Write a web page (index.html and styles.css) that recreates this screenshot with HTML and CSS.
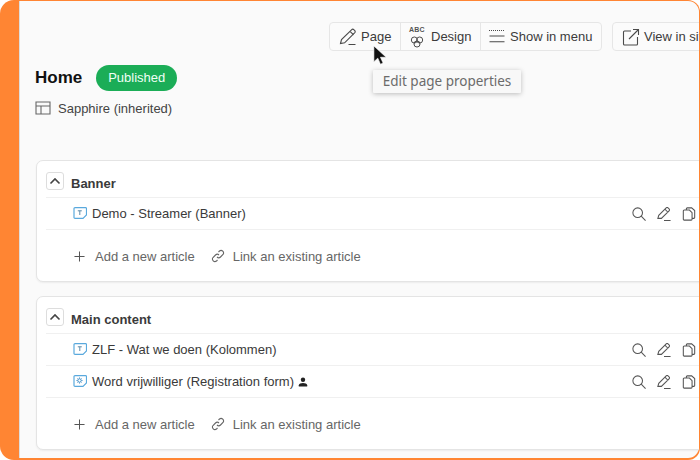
FILE: index.html
```html
<!DOCTYPE html>
<html lang="en">
<head>
<meta charset="utf-8">
<title>Home</title>
<link rel="stylesheet" href="styles.css">
</head>
<body>
<div class="frame">
  <main class="panel">
    <div class="toolbar">
      <div class="btn-group">
        <div class="btn page"><svg class="ico" viewBox="0 0 18 18"><path d="M1.500 15.500l1-4L12.500 1.800a1.800 1.800 0 0 1 2.500 0l.6.6a1.800 1.800 0 0 1 0 2.500L5.600 14.800z M11 3.300l3.600 3.600 M9.500 16.500h7"/></svg>Page</div>
        <div class="btn design"><svg class="ico" viewBox="0 0 18 18"><circle cx="6" cy="9" r="3.400"/><circle cx="12" cy="9" r="3.400"/><circle cx="9" cy="13.500" r="3.400"/></svg><span class="abc">ABC</span>Design</div>
        <div class="btn menu"><svg class="ico" viewBox="0 0 18 18"><path d="M0 2.500h16" stroke-dasharray="1 1"/><path d="M.5 8h15M.5 13.700h15"/></svg>Show in menu</div>
      </div>
      <div class="btn-group view"><div class="btn"><svg class="ico" viewBox="0 0 18 18"><path d="M9 3H2.500a1 1 0 0 0-1 1v12a1 1 0 0 0 1 1h12a1 1 0 0 0 1-1V9M7 11L16.500 1.500M11 1.500h5.500V7"/></svg>View in site</div></div>
    </div>
    <div class="tooltip">Edit page properties</div>
    <svg class="cursor" viewBox="0 0 16 24"><path d="M1 1v18l4.500-4 3 7 3-1.300-3-6.700H15z"/></svg>
    <div class="title-row"><h1>Home</h1><span class="badge">Published</span></div>
    <div class="layout-row"><svg class="layout-ico" viewBox="0 0 16 16"><path d="M1 2h14v12H1zM1 6h14M6 6v8"/></svg>Sapphire (inherited)</div>

    <section class="card banner">
      <header class="card-head"><span class="toggle"><svg viewBox="0 0 12 8"><path d="M1.500 6.500L6 2l4.500 4.500"/></svg></span><h2>Banner</h2></header>
      <div class="row">
        <svg class="art" viewBox="0 0 14 12"><path d="M2 .6h10.500a1 1 0 0 1 1 1V8L10 11.400H2a1 1 0 0 1-1-1V1.600a1 1 0 0 1 1-1z"/><path class="dark" d="M4.800 3.800h4M6.800 3.800v4.200"/></svg>
        <span class="name">Demo - Streamer (Banner)</span>
        <span class="actions"><svg viewBox="0 0 16 16"><circle cx="6.500" cy="6.500" r="5.500"/><path d="M10.500 10.500L15.500 15.500"/></svg><svg viewBox="0 0 16 16"><path d="M1 13l1-3.500L10.500 1a1.500 1.500 0 0 1 2.100 0l1.200 1.200a1.500 1.500 0 0 1 0 2.100L5 13zM9 2.500L12.500 6M8 15.500h7.500"/></svg><svg viewBox="0 0 16 16"><path d="M5 3.500V2a1 1 0 0 1 1-1h5l3.500 3v8a1 1 0 0 1-1 1H12M2.500 3.500h6l3 3V14a1 1 0 0 1-1 1h-8a1 1 0 0 1-1-1V4.500a1 1 0 0 1 1-1z"/></svg></span>
      </div>
      <footer class="add-row">
        <span class="add"><svg viewBox="0 0 12 12"><path d="M6 .5v11M.5 6h11"/></svg>Add a new article</span>
        <span class="link"><svg viewBox="0 0 14 14"><path d="M6 8a2.500 2.500 0 0 0 3.500 0l2.500-2.500A2.500 2.500 0 0 0 8.500 2L7.500 3M8 6a2.500 2.500 0 0 0-3.500 0L2 8.500A2.500 2.500 0 0 0 5.500 12l1-1"/></svg>Link an existing article</span>
      </footer>
    </section>

    <section class="card main">
      <header class="card-head"><span class="toggle"><svg viewBox="0 0 12 8"><path d="M1.500 6.500L6 2l4.500 4.500"/></svg></span><h2>Main content</h2></header>
      <div class="row">
        <svg class="art" viewBox="0 0 14 12"><path d="M2 .6h10.500a1 1 0 0 1 1 1V8L10 11.400H2a1 1 0 0 1-1-1V1.600a1 1 0 0 1 1-1z"/><path class="dark" d="M4.800 3.800h4M6.800 3.800v4.200"/></svg>
        <span class="name">ZLF - Wat we doen (Kolommen)</span>
        <span class="actions"><svg viewBox="0 0 16 16"><circle cx="6.500" cy="6.500" r="5.500"/><path d="M10.500 10.500L15.500 15.500"/></svg><svg viewBox="0 0 16 16"><path d="M1 13l1-3.500L10.500 1a1.500 1.500 0 0 1 2.100 0l1.200 1.200a1.500 1.500 0 0 1 0 2.100L5 13zM9 2.500L12.500 6M8 15.500h7.500"/></svg><svg viewBox="0 0 16 16"><path d="M5 3.500V2a1 1 0 0 1 1-1h5l3.500 3v8a1 1 0 0 1-1 1H12M2.500 3.500h6l3 3V14a1 1 0 0 1-1 1h-8a1 1 0 0 1-1-1V4.500a1 1 0 0 1 1-1z"/></svg></span>
      </div>
      <div class="row">
        <svg class="art" viewBox="0 0 14 12"><path d="M2 .6h10.500a1 1 0 0 1 1 1V8L10 11.400H2a1 1 0 0 1-1-1V1.600a1 1 0 0 1 1-1z"/><circle class="gear" cx="6.500" cy="5.500" r="1.700"/><path class="gear" d="M6.500 2.500v1M6.500 7.500v1M3.500 5.500h1M8.500 5.500h1M4.500 3.500l.6.6M8.500 3.500l-.6.6M4.500 7.500l.6-.6M8.500 7.500l-.6-.6"/></svg>
        <span class="name">Word vrijwilliger (Registration form)</span>
        <svg class="person" viewBox="0 0 10 10"><circle cx="5" cy="2.700" r="2.200"/><path d="M.8 9.500V8.200C.8 6.700 3 6 5 6s4.200.7 4.200 2.200v1.300z"/></svg>
        <span class="actions"><svg viewBox="0 0 16 16"><circle cx="6.500" cy="6.500" r="5.500"/><path d="M10.500 10.500L15.500 15.500"/></svg><svg viewBox="0 0 16 16"><path d="M1 13l1-3.500L10.500 1a1.500 1.500 0 0 1 2.100 0l1.200 1.200a1.500 1.500 0 0 1 0 2.100L5 13zM9 2.500L12.500 6M8 15.500h7.500"/></svg><svg viewBox="0 0 16 16"><path d="M5 3.500V2a1 1 0 0 1 1-1h5l3.500 3v8a1 1 0 0 1-1 1H12M2.500 3.500h6l3 3V14a1 1 0 0 1-1 1h-8a1 1 0 0 1-1-1V4.500a1 1 0 0 1 1-1z"/></svg></span>
      </div>
      <footer class="add-row">
        <span class="add"><svg viewBox="0 0 12 12"><path d="M6 .5v11M.5 6h11"/></svg>Add a new article</span>
        <span class="link"><svg viewBox="0 0 14 14"><path d="M6 8a2.500 2.500 0 0 0 3.500 0l2.500-2.500A2.500 2.500 0 0 0 8.500 2L7.500 3M8 6a2.500 2.500 0 0 0-3.500 0L2 8.500A2.500 2.500 0 0 0 5.500 12l1-1"/></svg>Link an existing article</span>
      </footer>
    </section>
  </main>
</div>
</body>
</html>
```
FILE: styles.css
```css
* { box-sizing: border-box; }
html, body { margin: 0; height: 100%; }
body { width: 700px; height: 460px; overflow: hidden; background: #fff; font-family: "Liberation Sans", Arial, sans-serif; color: #333; }
svg { fill: none; stroke: currentColor; stroke-width: 1.1; display: block; flex: none; }
.frame { width: 700px; height: 460px; background: #ff8533; border-radius: 14px 12px 12px 14px; padding: 1px 1px 2px 19px; overflow: hidden; }
.panel { position: relative; width: 680px; height: 457px; background: #fafafa; border-left: 1px solid #ddd; border-radius: 0 11px 11px 0; padding: 21px 0 0 15px; overflow: hidden; }
.toolbar { display: flex; gap: 10px; margin-left: 294px; height: 29px; }
.btn-group { display: flex; height: 29px; background: #fbfbfb; border: 1px solid #e6e6e6; border-radius: 4px; flex: none; }
.btn { position: relative; display: flex; align-items: center; gap: 6px; padding: 0 9px; font-size: 13px; color: #3c3c3c; border-left: 1px solid #e6e6e6; white-space: nowrap; }
.btn:first-child { border-left: 0; }
.btn .ico { width: 18px; height: 18px; stroke: #4a4a4a; }
.btn.page { width: 70px; gap: 4px; }
.btn.design { width: 80px; gap: 6px; padding-left: 8px; }
.btn.design .ico { margin-top: 6px; width: 16px; height: 16px; }
.abc { position: absolute; left: 8px; top: 3px; font-size: 7px; line-height: 8px; font-weight: 700; letter-spacing: .2px; color: #555; }
.btn.menu { width: 121px; gap: 3px; padding-left: 8px; }
.view { width: 120px; }
.view .btn { gap: 4px; }
.tooltip { position: absolute; left: 353px; top: 69px; width: 148px; height: 23px; background: #f8f8f8; border-radius: 1px; box-shadow: 0 1px 5px rgba(0,0,0,.25); font: 13.500px/23px "Noto Sans", sans-serif; color: #6b6b6b; text-align: center; z-index: 2; }
.cursor { position: absolute; left: 353px; top: 44px; width: 14px; height: 21px; z-index: 3; }
.cursor path { fill: #111; stroke: #fff; stroke-width: .7; }
.title-row { display: flex; align-items: center; gap: 14px; margin-top: 14px; height: 26px; }
h1 { margin: 0; font-size: 17px; font-weight: 700; color: #111; }
.badge { display: block; width: 81px; height: 26px; border-radius: 13px; background: #1bad57; font-size: 13px; line-height: 26px; text-align: center; color: #f0fff5; }
.layout-row { display: flex; align-items: center; gap: 7px; margin-top: 8px; height: 18px; font-size: 13px; color: #444; }
.layout-ico { width: 16px; height: 16px; color: #666; }
.card { width: 700px; margin-left: 1px; background: #fff; border: 1px solid #e4e4e4; border-radius: 7px; box-shadow: 0 1px 2px rgba(0,0,0,.06); padding: 0 9px; }
.banner { margin-top: 43px; height: 122px; }
.main { margin-top: 14px; height: 154px; }
.card-head { display: flex; align-items: flex-start; gap: 7px; height: 37px; padding-top: 11px; border-bottom: 1px solid #f0f0f0; }
.toggle { display: flex; align-items: center; justify-content: center; width: 18px; height: 18px; background: #fff; border: 1px solid #ddd; border-radius: 3px; }
.toggle svg { width: 12px; height: 8px; stroke-width: 1.6; color: #444; }
h2 { margin: 3px 0 0; font-size: 13px; line-height: 18px; font-weight: 700; color: #3a3a3a; }
.row { display: flex; align-items: center; height: 32px; padding: 0 30px 0 27px; border-bottom: 1px solid #f0f0f0; font-size: 13px; color: #3a3a3a; }
.art { width: 14px; height: 12px; margin-right: 5px; margin-top: -2px; color: #5aa9dd; stroke-width: 1.200; }
.art .dark { stroke: #5d8aa8; stroke-width: 1; }
.art .gear { stroke: #3f8fc9; stroke-width: 1; }
.person { width: 10px; height: 10px; margin-left: 4px; }
.person circle, .person path { fill: #222; stroke: none; }
.name { white-space: nowrap; }
.actions { margin-left: auto; display: flex; gap: 11px; color: #555; }
.actions svg { width: 14px; height: 14px; stroke-width: 1.200; }
.add-row { display: flex; align-items: center; height: 52px; padding: 0 0 0 28px; font-size: 13px; color: #666; }
.add, .link { display: flex; align-items: center; }
.add svg { width: 11px; height: 11px; margin-right: 10px; color: #555; }
.link { margin-left: 16px; }
.link svg { width: 14px; height: 14px; margin-right: 8px; color: #666; }
```
